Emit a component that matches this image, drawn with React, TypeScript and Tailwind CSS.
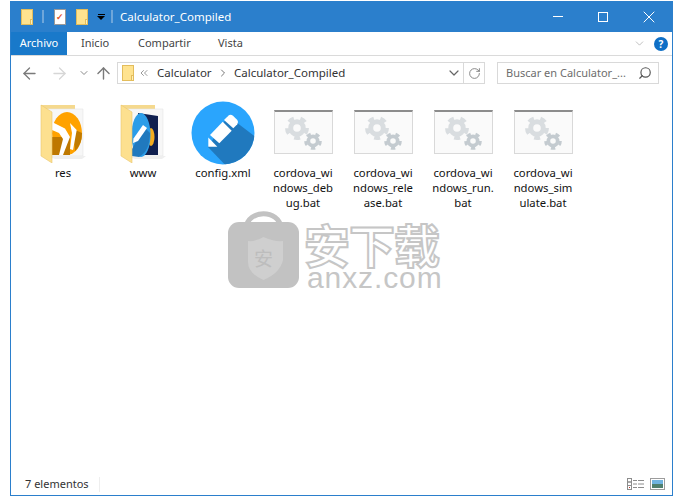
import React from 'react';
import { ArrowLeft, ArrowRight, ArrowUp, ChevronDown, ChevronRight, ChevronsLeft, RotateCw, Search, X } from 'lucide-react';

const FolderSmall = ({ size = 'h-[16px] w-[12px]' }: { size?: string }) => (
  <div className={`relative ${size} border border-[#e3bd5c] bg-[#ffe38f]`}>
    <div className="absolute right-[-1px] bottom-[-1px] h-[6px] w-[3px] border border-[#e3bd5c] bg-[#fff0b8]" />
  </div>
);

const Gear = ({ cx, cy, r, fill }: { cx: number; cy: number; r: number; fill: string }) => (
  <g>
    <circle cx={cx} cy={cy} r={r * 1.05} fill="none" stroke={fill} strokeWidth={r * 0.42} strokeDasharray={`${r * 0.62} ${r * 0.7}`} />
    <circle cx={cx} cy={cy} r={r * 0.66} fill="none" stroke={fill} strokeWidth={r * 0.52} />
  </g>
);

const BatIcon = () => (
  <div className="mb-[2px] h-[44px] w-[59px] border border-[#d9d9d9] border-t-[2px] border-t-[#8c8c8c] bg-[#fafafa]">
    <svg width="57" height="41" viewBox="0 0 57 41">
      <Gear cx={22} cy={16} r={9.5} fill="#d9dde0" />
      <Gear cx={38} cy={29} r={7} fill="#c4cbd0" />
    </svg>
  </div>
);

const PencilBadge = ({ size }: { size: number }) => (
  <svg width={size} height={size} viewBox="0 0 64 64">
    <defs>
      <clipPath id="badge">
        <circle cx="32" cy="32" r="31.5" />
      </clipPath>
    </defs>
    <circle cx="32" cy="32" r="31.5" fill="#2aa5fd" />
    <path d="M37 15 L70 40 L70 70 L40 70 L17 46 Z" fill="#2079be" clipPath="url(#badge)" />
    <path d="M37.300 14.700 Q39.500 12.800 42 14.800 L46.300 19 Q48 21.300 46.300 23.300 L42.300 27.300 L33 19 Z" fill="#fff" />
    <path d="M31.700 20.700 L40.700 29.700 L28.300 42.300 L19 34 Z" fill="#fff" />
    <path d="M17.300 36.500 L17.300 45.700 L26.300 45.700 Z" fill="#fff" />
  </svg>
);

const FolderBase = ({ children }: { children: React.ReactNode }) => (
  <svg width="48" height="60" viewBox="0 0 48 60">
    <path d="M2 2 L36 2 L36 12 L2 12 Z" fill="#f5d98e" />
    <path d="M8 6 L44 6 L44 53 L8 53 Z" fill="#f7f7f7" stroke="#e6e6e6" strokeWidth="0.6" />
    <path d="M8 53 L47 53 L43 56 L16 56 Z" fill="#efefef" />
    {children}
    <path d="M2 2 L13 9 L13 60 L2 53 Z" fill="#fde08f" stroke="#e9c66f" strokeWidth="0.6" />
  </svg>
);

const ResFolder = () => (
  <FolderBase>
    <ellipse cx="28" cy="30.500" rx="15" ry="21.500" fill="#ffa200" />
    <path d="M36 48 A15 21.500 0 0 0 43 30 L34 26 Z" fill="#c07a00" />
    <path d="M13 34 L31 34 L31 52 L13 52 Z" fill="#be7800" />
    <path d="M13 19 L26 25.500 L31 34 L24 52 L20 52 L24 36 L20 30 L13 27 Z" fill="#fff" />
    <path d="M31 20 L37.700 27 L34 47 L31 46 L33 30 Z" fill="#fff" />
  </FolderBase>
);

const WwwFolder = () => (
  <FolderBase>
    <path d="M19 10 L39 13 L39 52 L19 52 Z" fill="#10204f" />
    <ellipse cx="32" cy="34" rx="3.500" ry="9" fill="#f4ad1e" />
    <ellipse cx="22" cy="32" rx="9.500" ry="22" fill="#2b9de8" />
    <path d="M13 46 L25 24 L31 30 Q31 48 20 54 L13 53 Z" fill="#2079be" />
    <path d="M14.500 35.500 L24 22 L28 25 L19 38 L14 40 Z" fill="#fff" />
  </FolderBase>
);

const items = [
  { name: 'res', icon: <ResFolder /> },
  { name: 'www', icon: <WwwFolder /> },
  { name: 'config.xml', icon: <PencilBadge size={64} /> },
  { name: 'debug', lines: ['cordova_wi', 'ndows_deb', 'ug.bat'], icon: <BatIcon /> },
  { name: 'release', lines: ['cordova_wi', 'ndows_rele', 'ase.bat'], icon: <BatIcon /> },
  { name: 'run', lines: ['cordova_wi', 'ndows_run.', 'bat'], icon: <BatIcon /> },
  { name: 'simulate', lines: ['cordova_wi', 'ndows_sim', 'ulate.bat'], icon: <BatIcon /> },
];

const Watermark = () => (
  <div className="absolute left-[228px] top-[208px] flex select-none gap-[5px]">
    <svg width="71" height="80" viewBox="0 0 71 80">
      <path d="M18 20 C20 1 51 1 53 20" fill="none" stroke="#c2c2c2" strokeWidth="5" />
      <rect x="0" y="14" width="71" height="66" rx="11" fill="#c2c2c2" />
      <path d="M35.500 29 Q46 34 55 33 L55 52 Q52 65 35.500 72 Q19 65 20 52 L20 33 Q27 34 35.500 29 Z" fill="#cfcfcf" />
      <text x="35.500" y="58" textAnchor="middle" fontSize="19" fill="#bdbdbd" fontFamily="'Noto Sans CJK SC', sans-serif">安</text>
    </svg>
    <div className="flex flex-col pt-[12px]">
      <div className="h-[46px] text-[46px] leading-[46px] font-bold tracking-[-1px] text-white [-webkit-text-stroke:2px_#c6c6c6] font-['Noto_Sans_CJK_SC',sans-serif]">
        安下载
      </div>
      <div className="ml-[3px] text-[30px] leading-[24px] tracking-[0.9px] text-[#c6c6c6] font-['Liberation_Sans',sans-serif]">anxz.com</div>
    </div>
  </div>
);

export default function App() {
  return (
    <div className="relative h-[499px] w-[673px] overflow-hidden bg-white pt-[1px] pl-[10px] font-['Noto_Sans',sans-serif] text-[12px] text-[#1a1a2e]">
      <div className="flex h-[495px] w-[663px] flex-col border-x border-b border-[#2b7fcc] bg-white">
        {/* Title bar */}
        <div className="flex h-[31px] shrink-0 items-center bg-[#2b7fcc]">
          <div className="ml-[10px] flex items-center">
            <FolderSmall />
            <div className="ml-[9px] h-[13px] w-[2px] bg-[#6ea6da]" />
            <div className="ml-[10px] flex h-[16px] w-[12px] items-center justify-center border border-[#9a9a9a] bg-white text-[9px] leading-none font-bold text-[#e2552a]">✓</div>
            <div className="ml-[10px]"><FolderSmall /></div>
            <div className="ml-[9px] flex flex-col items-center">
              <div className="h-[1px] w-[7px] bg-black" />
              <div className="mt-[1px] h-0 w-0 border-x-[4px] border-t-[4px] border-x-transparent border-t-black" />
            </div>
            <div className="ml-[6px] h-[13px] w-[2px] bg-[#6ea6da]" />
          </div>
          <span className="ml-[7px] text-[11.5px] text-white">Calculator_Compiled</span>
          <div className="ml-auto flex items-center text-white">
            <div className="h-[1px] w-[10px] bg-white" />
            <div className="ml-[35px] h-[10px] w-[10px] border border-white" />
            <X size={20} strokeWidth={1.2} className="mr-[13px] ml-[31px]" />
          </div>
        </div>

        {/* Ribbon tabs */}
        <div className="flex h-[24px] shrink-0 items-center border-b border-[#dadada] text-[11px] text-[#444]">
          <div className="flex h-[23px] w-[56px] items-center justify-center bg-[#1979ca] text-white">Archivo</div>
          <span className="ml-[14px] w-[57px]">Inicio</span>
          <span className="w-[80px]">Compartir</span>
          <span>Vista</span>
          <ChevronDown size={13} strokeWidth={1} className="mr-[8px] ml-auto text-[#8a8a8a]" />
          <div className="mr-[4px] flex h-[14px] w-[14px] items-center justify-center rounded-full bg-[#0f6fc6] text-[10px] leading-none font-bold text-white">?</div>
        </div>

        {/* Address row */}
        <div className="flex h-[34px] shrink-0 items-center text-[#7a7a7a]">
          <ArrowLeft size={19} strokeWidth={1.6} className="ml-[9px]" />
          <ArrowRight size={19} strokeWidth={1.6} className="ml-[11px] text-[#d6d6d6]" />
          <ChevronDown size={12} strokeWidth={2} className="ml-[9px] text-[#8a8a8a]" />
          <ArrowUp size={19} strokeWidth={1.8} className="ml-[4px]" />
          <div className="ml-[4px] flex h-[22px] w-[368px] items-center border border-[#d9d9d9] text-[11.5px] text-[#333]">
            <div className="ml-[4px]"><FolderSmall /></div>
            <ChevronsLeft size={12} strokeWidth={1.5} className="ml-[4px] text-[#777]" />
            <span className="ml-[7px] w-[60px]">Calculator</span>
            <ChevronRight size={12} strokeWidth={2} className="text-[#777]" />
            <span className="ml-[5px]">Calculator_Compiled</span>
            <ChevronDown size={16} strokeWidth={1.8} className="mr-[1px] ml-auto text-[#666]" />
            <div className="flex h-full w-[21px] items-center justify-center border-l border-[#d9d9d9]">
              <RotateCw size={13} strokeWidth={1.6} className="text-[#777]" />
            </div>
          </div>
          <div className="ml-[12px] flex h-[22px] w-[162px] items-center border border-[#d9d9d9] pl-[8px] text-[11px] text-[#6d6d6d]">
            Buscar en Calculator_...
            <Search size={14} strokeWidth={2} className="mr-[6px] ml-auto -scale-x-100 text-[#555]" />
          </div>
        </div>

        {/* File list */}
        <div className="flex flex-1 items-start pt-[11px] pl-[12px]">
          {items.map((item) => (
            <div key={item.name} className="flex w-[80px] flex-col items-center">
              <div className="flex h-[64px] items-center justify-center">{item.icon}</div>
              <div className="text-center text-[11.3px] leading-[15px] text-[#111]">
                {item.lines ? item.lines.map((l) => <div key={l}>{l}</div>) : item.name}
              </div>
            </div>
          ))}
        </div>

        {/* Status bar */}
        <div className="flex h-[22px] shrink-0 items-center pl-[14px] text-[11px] text-[#333]">
          7 elementos
          <div className="ml-[10px] h-[15px] w-[1px] bg-[#eeeeee]" />
          <div className="ml-auto flex items-center gap-[6px] pr-[7px]">
            <svg width="17" height="12" viewBox="0 0 17 12">
              <rect x="0.500" y="0.500" width="4" height="3.500" fill="none" stroke="#8c8c8c" />
              <rect x="0.500" y="4" width="4" height="3.500" fill="none" stroke="#8c8c8c" />
              <rect x="0.500" y="7.500" width="4" height="4" fill="none" stroke="#8c8c8c" />
              <rect x="2" y="9" width="1" height="1" fill="#c0392b" />
              <path d="M6 2.500h4M11 2.500h6M6 6h4M11 6h6M6 9.500h4M11 9.500h6" stroke="#8c8c8c" />
            </svg>
            <svg width="15" height="12" viewBox="0 0 15 12">
              <rect x="0.500" y="0.500" width="14" height="11" fill="#fff" stroke="#9c9c9c" />
              <rect x="2" y="2" width="11" height="4" fill="#6fb3e0" />
              <rect x="2" y="6" width="11" height="4" fill="#4f7f6e" />
            </svg>
          </div>
        </div>
      </div>
      <Watermark />
    </div>
  );
}
